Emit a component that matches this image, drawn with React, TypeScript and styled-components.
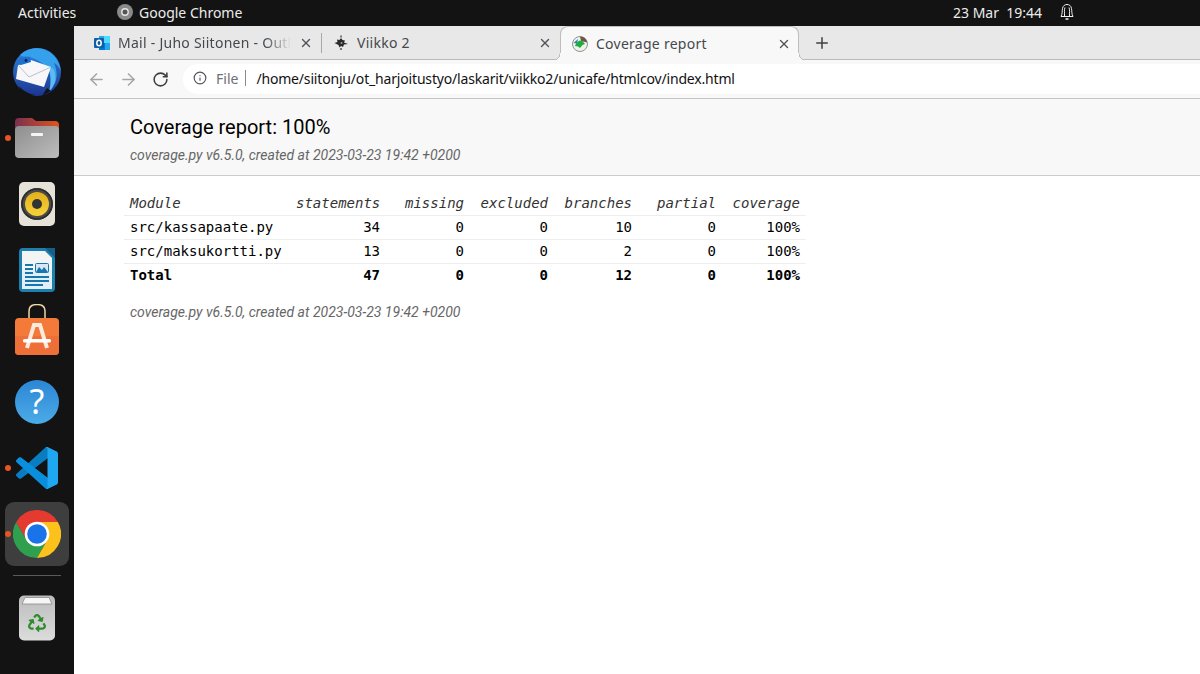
import React from "react";
import styled, {createGlobalStyle} from "styled-components";
import {ArrowLeft, ArrowRight, Info, Plus, RotateCw, X} from "lucide-react";
import {FaRecycle} from "react-icons/fa";

const GlobalStyle = createGlobalStyle`
  html, body {
    margin: 0;
    padding: 0;
    height: 100%;
    background: #fff;
    overflow: hidden;
  }
  * {
    box-sizing: border-box;
  }
`

const uiFont = `"Noto Sans", "Open Sans", sans-serif`

// Top bar
const Screen = styled.div`
  width: 1200px;
  height: 674px;
  display: flex;
  flex-direction: column;
  overflow: hidden;
`
const TopBar = styled.div`
  height: 26px;
  flex: none;
  background: #131313;
  color: #ececec;
  font-family: ${uiFont};
  font-size: 14px;
  display: flex;
  align-items: center;
  padding: 0 0 2px 18px;
`
const Activities = styled.span`
  width: 99px;
`
const AppMenu = styled.div`
  display: flex;
  align-items: center;
  gap: 6px;
  width: 835px;
`
const Clock = styled.span`
  width: 107px;
  padding-left: 1px;
`
const Desktop = styled.div`
  flex: 1;
  display: flex;
  min-height: 0;
`

// Dock
const Dock = styled.nav`
  width: 74px;
  flex: none;
  background: #131313;
  padding: 14px 5px 0;
  display: flex;
  flex-direction: column;
  gap: 2px;
`
const DockItem = styled.div<{$active?: boolean}>`
  position: relative;
  width: 64px;
  height: 64px;
  border-radius: 9px;
  display: flex;
  align-items: center;
  justify-content: center;
  background: ${p => p.$active ? "#3e3e3e" : "transparent"};
`
const RunningDot = styled.span`
  position: absolute;
  left: 0;
  top: 29px;
  width: 6px;
  height: 6px;
  border-radius: 50%;
  background: #e95420;
`
const DockSeparator = styled.div`
  height: 1px;
  background: #5a5a5a;
  margin: 7px 8px 8px;
`

// Browser
const Browser = styled.div`
  flex: 1;
  display: flex;
  flex-direction: column;
  min-width: 0;
  background: #fff;
`
const TabStrip = styled.div`
  height: 34px;
  flex: none;
  background: #e8e8e8;
  border-bottom: 1px solid #b9b9b9;
  padding-left: 8px;
  display: flex;
  align-items: stretch;
`
const Tab = styled.div<{$active?: boolean}>`
  position: relative;
  width: 239px;
  height: ${p => p.$active ? "34px" : "33px"};
  padding: 0 8px 0 12px;
  display: flex;
  align-items: center;
  gap: 8px;
  font-family: ${uiFont};
  font-size: 14px;
  letter-spacing: 0.26px;
  color: #45494d;
  background: ${p => p.$active ? "#f8f8f8" : "transparent"};
  border: ${p => p.$active ? "1px solid #bdbdbd" : "none"};
  border-bottom: none;
  border-radius: ${p => p.$active ? "8px 8px 0 0" : "0"};
  ${p => p.$active ? `
    padding-left: 11px;
    padding-right: 7px;
    &::before, &::after {
      content: "";
      position: absolute;
      bottom: 0;
      width: 8px;
      height: 7px;
    }
    &::before {
      left: -8px;
      background: radial-gradient(circle at 0 0, transparent 6.5px, #bdbdbd 6.6px, #bdbdbd 7.4px, #f8f8f8 7.5px);
    }
    &::after {
      right: -8px;
      background: radial-gradient(circle at 100% 0, transparent 6.5px, #bdbdbd 6.6px, #bdbdbd 7.4px, #f8f8f8 7.5px);
    }
  ` : ""}
`
const TabDivider = styled.span`
  position: absolute;
  right: -1px;
  top: 7px;
  width: 1px;
  height: 20px;
  background: #a8a8a8;
`
const TabTitle = styled.span<{$fade?: boolean}>`
  flex: 1;
  overflow: hidden;
  white-space: nowrap;
  ${p => p.$fade ? "mask-image: linear-gradient(to right, #000 85%, transparent 100%);" : ""}
`
const NewTab = styled.div`
  width: 46px;
  display: flex;
  align-items: center;
  justify-content: center;
  color: #3c4043;
`
const Toolbar = styled.div`
  height: 39px;
  flex: none;
  background: #f8f8f8;
  border-bottom: 1px solid #c4c4c4;
  padding: 4px 0 4px 12px;
  display: flex;
  align-items: center;
`
const NavButton = styled.div<{$enabled?: boolean}>`
  width: 20px;
  height: 20px;
  margin-right: 12px;
  display: flex;
  align-items: center;
  justify-content: center;
  color: ${p => p.$enabled ? "#3c4043" : "#a3a6a9"};
`
const Omnibox = styled.div`
  flex: 1;
  height: 30px;
  margin-left: 1px;
  background: #fff;
  border-radius: 15px 0 0 15px;
  padding: 0 0 2px 10px;
  display: flex;
  align-items: center;
  font-family: ${uiFont};
  font-size: 14px;
  color: #111;
`
const SecurityChip = styled.div`
  display: flex;
  align-items: center;
  gap: 9px;
  color: #6d7175;
  padding-right: 7px;
  border-right: 1px solid #8a8d90;
  height: 16px;
  margin-right: 10px;
`
const AddressText = styled.span`
  letter-spacing: -0.175px;
`
const Page = styled.main`
  flex: 1;
  overflow: hidden;
  background: #fff;
  font-family: Roboto, "Liberation Sans", sans-serif;
`
const ReportHeader = styled.header`
  height: 77px;
  background: #f8f8f8;
  border-bottom: 1px solid #ccc;
  padding: 16px 0 0 56px;
`
const Title = styled.h1`
  margin: 0;
  font-size: 20px;
  line-height: 24px;
  font-weight: 400;
  color: #000;
`
const Meta = styled.p`
  margin: 8px 0 0;
  font-size: 14px;
  line-height: 17px;
  font-style: italic;
  color: #666;
`
const ReportBody = styled.section`
  padding: 15px 0 0 50px;
`
const ReportTable = styled.table`
  width: 682px;
  table-layout: fixed;
  border-collapse: collapse;
  font-family: "DejaVu Sans Mono", "Liberation Mono", monospace;
  font-size: 14px;
  color: #000;
`
const HeadCell = styled.th<{$name?: boolean; $width: number}>`
  width: ${p => p.$width}px;
  height: 24px;
  padding: 0 6px;
  font-weight: 400;
  font-style: italic;
  color: #333;
  text-align: ${p => p.$name ? "left" : "right"};
  border-bottom: 1px solid #eee;
`
const Cell = styled.td<{$name?: boolean; $total?: boolean}>`
  height: 24px;
  padding: 0 6px;
  font-weight: ${p => p.$total ? 700 : 400};
  text-align: ${p => p.$name ? "left" : "right"};
  border-bottom: ${p => p.$total ? "none" : "1px solid #eee"};
`
const Footer = styled(Meta)`
  margin: 17px 0 0 6px;
`
const BellIcon = styled.svg`
  display: block;
`

// Dock icons
const ThunderbirdIcon = () => (
    <svg width="48" height="48" viewBox="0 0 48 48">
        <defs>
            <linearGradient id="birdBody" x1="0" x2="0" y1="0" y2="1">
                <stop offset="0" stopColor="#2c86e0"/>
                <stop offset="1" stopColor="#1c3590"/>
            </linearGradient>
        </defs>
        <circle cx="24" cy="24" r="24" fill="url(#birdBody)"/>
        <path d="M7 7 C13 1 22 -1 30 1 C40 4 47 13 48 24 C47 20 44 16 41 15 C44 22 45 30 41 37 C41 30 38 24 34 20 C28 13 20 9 14 9 C11 9 9 8 7 7Z" fill="#35a0ec"/>
        <path d="M40 20 C44 28 43 37 36 44 C38 36 38 28 36 22Z" fill="#5bbcf2"/>
        <path d="M34 40 L29 48 L38 43Z" fill="#131313"/>
        <path d="M6 38 C10 43 16 46 22 47 L14 48 C10 46 7 42 6 38Z" fill="#131313"/>
        <path d="M5 17 L18 12 L38 19 L31 39 L3 31Z" fill="#f7f7fa"/>
        <path d="M5 17 L16 29 L38 19" fill="none" stroke="#b4b9c8" strokeWidth="0.9"/>
        <path d="M3 16 C6 10 11 8 17 9 L18 14 L8 17Z" fill="#1f6fcf"/>
        <circle cx="13" cy="12.5" r="1.4" fill="#14204a"/>
    </svg>
)
const FilesIcon = () => (
    <svg width="44" height="40" viewBox="0 0 44 40">
        <defs>
            <linearGradient id="folderBack" x1="0" x2="1" y1="0" y2="0">
                <stop offset="0" stopColor="#7a3050"/>
                <stop offset="1" stopColor="#e0541f"/>
            </linearGradient>
            <linearGradient id="folderFront" x1="0" x2="1" y1="0" y2="1">
                <stop offset="0" stopColor="#8e8e8e"/>
                <stop offset="1" stopColor="#bdbdbd"/>
            </linearGradient>
        </defs>
        <path d="M0 4 Q0 0 4 0 H17 L21 3 H40 Q44 3 44 7 V20 H0Z" fill="url(#folderBack)"/>
        <rect x="0" y="8" width="44" height="32" rx="4" fill="url(#folderFront)"/>
        <rect x="16" y="15" width="12" height="3" rx="1" fill="#f4f4f4"/>
    </svg>
)
const RhythmboxIcon = () => (
    <svg width="36" height="44" viewBox="0 0 36 44">
        <defs>
            <linearGradient id="coneFill" x1="0" x2="0" y1="0" y2="1">
                <stop offset="0" stopColor="#e3b01a"/>
                <stop offset="1" stopColor="#f7d23a"/>
            </linearGradient>
        </defs>
        <rect width="36" height="44" rx="5" fill="#e6e2d8"/>
        <circle cx="18" cy="22" r="16" fill="#4a4a4a"/>
        <circle cx="18" cy="22" r="15" fill="none" stroke="#2c2c2c" strokeWidth="1.6"/>
        <circle cx="18" cy="22" r="12" fill="url(#coneFill)"/>
        <circle cx="18" cy="22" r="5" fill="#333"/>
    </svg>
)
const WriterIcon = () => (
    <svg width="36" height="44" viewBox="0 0 36 44">
        <path d="M4 0 H27 L36 9 V40 Q36 44 32 44 H4 Q0 44 0 40 V4 Q0 0 4 0Z" fill="#1d7fae"/>
        <path d="M3 3 H26 L33 10 V41 H3Z" fill="#f3f4f4"/>
        <path d="M3 22 H33 V41 H3Z" fill="#e2f0f6"/>
        <path d="M26 0 H36 V10Z" fill="#14608a"/>
        <rect x="6" y="16" width="8" height="2" fill="#1676b0"/>
        <rect x="6" y="20" width="8" height="2" fill="#1676b0"/>
        <rect x="6" y="24" width="8" height="2" fill="#1676b0"/>
        <rect x="6" y="28" width="24" height="2" fill="#1676b0"/>
        <rect x="6" y="32" width="24" height="2" fill="#1676b0"/>
        <rect x="6" y="36" width="18" height="2" fill="#1676b0"/>
        <rect x="16.5" y="15.5" width="13" height="9" rx="1" fill="#d9e8f2" stroke="#1676b0"/>
        <path d="M17 24 L20 19 L23 22 L25 19 L29 24Z" fill="#1676b0"/>
    </svg>
)
const SoftwareIcon = () => (
    <svg width="44" height="64" viewBox="0 0 44 64">
        <path d="M14 17 V7 Q14 0.5 22 0.5 Q30 0.5 30 7 V17" fill="none" stroke="#f2d5a8" strokeWidth="1.5"/>
        <rect x="0" y="14" width="44" height="37" rx="4" fill="#f47a3a"/>
        <path d="M0 32 H44 V47 Q44 51 40 51 H4 Q0 51 0 47Z" fill="#ee7038"/>
        <path d="M12 44 L19 21 H25 L32 44" fill="none" stroke="#fbeadf" strokeWidth="4"/>
        <rect x="8" y="35" width="28" height="3.5" rx="1.5" fill="#fff"/>
    </svg>
)
const HelpIcon = () => (
    <svg width="44" height="44" viewBox="0 0 44 44">
        <defs>
            <linearGradient id="helpFill" x1="0" x2="0" y1="0" y2="1">
                <stop offset="0" stopColor="#2b86d4"/>
                <stop offset="1" stopColor="#4cabe8"/>
            </linearGradient>
        </defs>
        <circle cx="22" cy="22" r="22" fill="url(#helpFill)"/>
        <text x="22" y="34" textAnchor="middle" fontFamily="'Noto Sans', sans-serif" fontSize="34" fill="#fff">?</text>
    </svg>
)
const CodeIcon = () => (
    <svg width="42" height="42" viewBox="0 0 100 100">
        <path d="M96.46 10.8 L75.86 .9 C73.47 -.25 70.62 .24 68.75 2.11 L1.36 63.56 C-.45 65.21 -.45 68.06 1.37 69.71 L6.88 74.72 C8.37 76.07 10.6 76.17 12.2 74.96 L93.42 13.36 C96.14 11.29 100.06 13.23 100.06 16.65 V16.41 C100.06 14 98.68 11.81 96.46 10.8Z" fill="#0a7cc2"/>
        <path d="M96.46 89.2 L75.86 99.1 C73.47 100.25 70.62 99.76 68.75 97.89 L1.36 36.44 C-.45 34.79 -.45 31.94 1.37 30.29 L6.88 25.28 C8.37 23.93 10.6 23.83 12.2 25.04 L93.42 86.64 C96.14 88.71 100.06 86.77 100.06 83.35 V83.59 C100.06 86 98.68 88.19 96.46 89.2Z" fill="#0a8fdc"/>
        <path d="M75.86 99.13 C73.47 100.28 70.62 99.79 68.75 97.92 C71.06 100.23 75 98.59 75 95.33 V4.67 C75 1.41 71.06 -.23 68.75 2.08 C70.62 .21 73.47 -.28 75.86 .87 L96.46 10.78 C98.62 11.82 100 14 100 16.41 V83.59 C100 86 98.62 88.18 96.46 89.22Z" fill="#1fa8f1"/>
    </svg>
)
const ChromeIcon = ({size}: {size: number}) => (
    <svg width={size} height={size} viewBox="0 0 48 48">
        <path d="M3.2 12 L13.6 30 L34.4 30 L24 48 A24 24 0 0 1 3.2 12Z" fill="#2fa04e"/>
        <path d="M44.8 12 H24 L34.4 30 L24 48 A24 24 0 0 0 44.8 12Z" fill="#fcc21b"/>
        <path d="M3.2 12 A24 24 0 0 1 44.8 12 H24 L13.6 30Z" fill="#e53a30"/>
        <circle cx="24" cy="24" r="12.3" fill="#fff"/>
        <circle cx="24" cy="24" r="9.8" fill="#1a73e8"/>
    </svg>
)
const TrashIcon = () => (
    <svg width="36" height="46" viewBox="0 0 36 46">
        <defs>
            <linearGradient id="binFill" x1="0" x2="0" y1="0" y2="1">
                <stop offset="0" stopColor="#bcbcbc"/>
                <stop offset="1" stopColor="#dcdcdc"/>
            </linearGradient>
        </defs>
        <rect y="0.5" width="36" height="45" rx="5" fill="url(#binFill)"/>
        <path d="M3 9 L6 2.5 H30 L33 9Z" fill="#f6f6f6" stroke="#8c8c8c" strokeWidth="0.8"/>
        <FaRecycle x="9" y="19" size={18} color="#2e8b2e"/>
    </svg>
)

// Tab favicons
const OutlookIcon = () => (
    <svg width="16" height="16" viewBox="0 0 16 16" style={{flex: "none"}}>
        <rect x="5" y="1" width="11" height="14" fill="#28a8ea"/>
        <rect x="10" y="1" width="6" height="7" fill="#50d9ff"/>
        <rect x="5" y="8" width="6" height="7" fill="#0078d4"/>
        <rect x="0" y="3" width="10" height="10" rx="1" fill="#0f5fa8"/>
        <ellipse cx="5" cy="8" rx="2.2" ry="2.8" fill="none" stroke="#fff" strokeWidth="1.5"/>
    </svg>
)
const ViikkoIcon = () => (
    <svg width="16" height="16" viewBox="0 0 16 16" style={{flex: "none"}}>
        <path d="M8 3 L9.5 5 L12 5.5 L11 7.5 L15 9 L11 9.5 L10 12 L8 11 L6.5 12.5 L5.5 10 L1.5 8 L4.5 7 L4 4.5 L6.5 5Z" fill="#2a2a2a"/>
        <rect x="7" y="0.5" width="2" height="2" fill="#777"/>
        <rect x="7" y="13" width="2" height="2" fill="#777"/>
        <circle cx="8.5" cy="8" r="1" fill="#9a9a9a"/>
    </svg>
)
const CoverageIcon = () => (
    <svg width="16" height="16" viewBox="0 0 16 16" style={{flex: "none"}}>
        <circle cx="8" cy="8" r="7.5" fill="#f0f1ea" stroke="#8f9590"/>
        <path d="M8 .5 A7.5 7.5 0 0 1 15.2 6.5 L9 5Z" fill="#6e5548"/>
        <path d="M3 10 C4 6 7 4 10 4.5 L13 8 L10.5 9 L8 12 L6 10.5Z" fill="#1fae3c"/>
        <path d="M1.5 7 L6 3 L5 7.5Z" fill="#2b7fc4"/>
    </svg>
)

const columns = [
    {label: "statements", width: 96},
    {label: "missing", width: 84},
    {label: "excluded", width: 84},
    {label: "branches", width: 84},
    {label: "partial", width: 84},
    {label: "coverage", width: 84},
]

const rows: {name: string; total?: boolean; values: string[]}[] = [
    {name: "src/kassapaate.py", values: ["34", "0", "0", "10", "0", "100%"]},
    {name: "src/maksukortti.py", values: ["13", "0", "0", "2", "0", "100%"]},
    {name: "Total", total: true, values: ["47", "0", "0", "12", "0", "100%"]},
]

const meta = "coverage.py v6.5.0, created at 2023-03-23 19:42 +0200"

const App = () => {
    return (
        <Screen>
            <GlobalStyle/>
            <TopBar>
                <Activities>Activities</Activities>
                <AppMenu>
                    <svg width="16" height="16" viewBox="0 0 16 16">
                        <circle cx="8" cy="8" r="8" fill="#8a8a8a"/>
                        <circle cx="8" cy="8" r="3.2" fill="#555" stroke="#e8e8e8" strokeWidth="1.4"/>
                    </svg>
                    Google Chrome
                </AppMenu>
                <Clock>23 Mar&nbsp; 19:44</Clock>
                <BellIcon width="16" height="18" viewBox="0 0 16 18" fill="none" stroke="#f2f2f2" strokeWidth="1">
                    <path d="M2 13.5 C3.5 11 3 8 3.5 5.5 C4 2.5 6 1.5 8 1.5 C10 1.5 12 2.5 12.5 5.5 C13 8 12.5 11 14 13.5Z"/>
                    <path d="M5.5 13 C5.7 10 5 7 6 4.5 M10.5 13 C10.3 10 11 7 10 4.5"/>
                    <path d="M6.5 16 H9.5" strokeWidth="1.5"/>
                </BellIcon>
            </TopBar>
            <Desktop>
                <Dock>
                    <DockItem><ThunderbirdIcon/></DockItem>
                    <DockItem><RunningDot/><FilesIcon/></DockItem>
                    <DockItem><RhythmboxIcon/></DockItem>
                    <DockItem><WriterIcon/></DockItem>
                    <DockItem><SoftwareIcon/></DockItem>
                    <DockItem><HelpIcon/></DockItem>
                    <DockItem><RunningDot/><CodeIcon/></DockItem>
                    <DockItem $active><RunningDot/><ChromeIcon size={48}/></DockItem>
                    <DockSeparator/>
                    <DockItem><TrashIcon/></DockItem>
                </Dock>
                <Browser>
                    <TabStrip>
                        <Tab>
                            <OutlookIcon/>
                            <TabTitle $fade>Mail - Juho Siitonen - Outlook</TabTitle>
                            <X size={14} strokeWidth={2.4} color="#50545a"/>
                            <TabDivider/>
                        </Tab>
                        <Tab>
                            <ViikkoIcon/>
                            <TabTitle>Viikko 2</TabTitle>
                            <X size={14} strokeWidth={2.4} color="#50545a"/>
                        </Tab>
                        <Tab $active>
                            <CoverageIcon/>
                            <TabTitle>Coverage report</TabTitle>
                            <X size={14} strokeWidth={2.4} color="#50545a"/>
                        </Tab>
                        <NewTab><Plus size={18} strokeWidth={2}/></NewTab>
                    </TabStrip>
                    <Toolbar>
                        <NavButton><ArrowLeft size={19} strokeWidth={2}/></NavButton>
                        <NavButton><ArrowRight size={19} strokeWidth={2}/></NavButton>
                        <NavButton $enabled><RotateCw size={17} strokeWidth={2.2}/></NavButton>
                        <Omnibox>
                            <SecurityChip>
                                <Info size={14} strokeWidth={2} color="#50545a"/>
                                File
                            </SecurityChip>
                            <AddressText>/home/siitonju/ot_harjoitustyo/laskarit/viikko2/unicafe/htmlcov/index.html</AddressText>
                        </Omnibox>
                    </Toolbar>
                    <Page>
                        <ReportHeader>
                            <Title>Coverage report: 100%</Title>
                            <Meta>{meta}</Meta>
                        </ReportHeader>
                        <ReportBody>
                            <ReportTable>
                                <thead>
                                    <tr>
                                        <HeadCell $name $width={166}>Module</HeadCell>
                                        {columns.map(c => <HeadCell key={c.label} $width={c.width}>{c.label}</HeadCell>)}
                                    </tr>
                                </thead>
                                <tbody>
                                    {rows.map(r => (
                                        <tr key={r.name}>
                                            <Cell $name $total={r.total}>{r.name}</Cell>
                                            {r.values.map((v, i) => <Cell key={i} $total={r.total}>{v}</Cell>)}
                                        </tr>
                                    ))}
                                </tbody>
                            </ReportTable>
                            <Footer>{meta}</Footer>
                        </ReportBody>
                    </Page>
                </Browser>
            </Desktop>
        </Screen>
    )
}

export default App;
